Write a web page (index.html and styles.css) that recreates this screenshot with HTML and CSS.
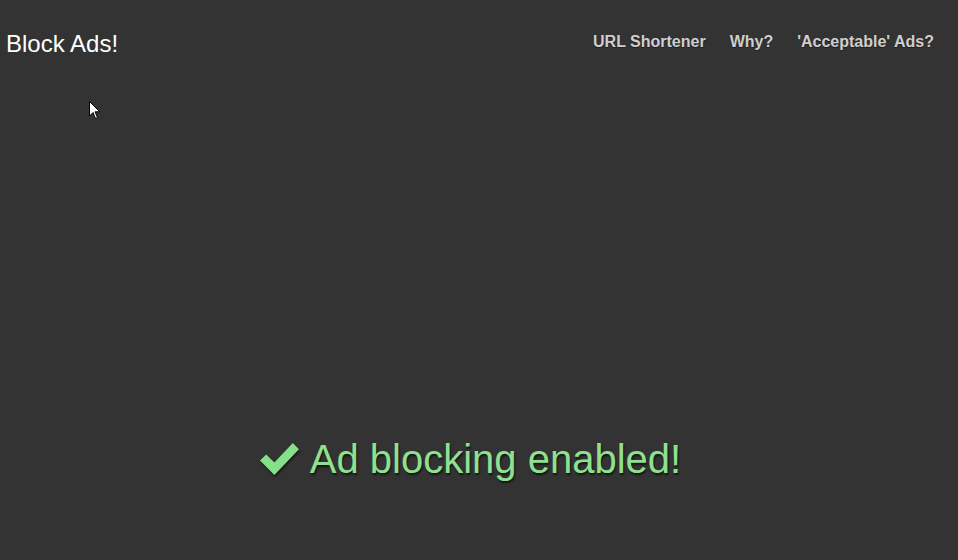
FILE: index.html
```html
<!DOCTYPE html>
<html lang="en">
<head>
    <meta charset="UTF-8">
    <meta name="viewport" content="width=device-width, initial-scale=1.0">
    <title>Block Ads!</title>
    <link rel="stylesheet" href="styles.css">
</head>
<body>
    <header class="topbar">
        <a class="brand" href="#">Block Ads!</a>
        <nav class="nav">
            <a href="#">URL Shortener</a>
            <a href="#">Why?</a>
            <a href="#">'Acceptable' Ads?</a>
        </nav>
    </header>

    <main class="status">
        <h1 class="status-msg">
            <svg class="check" viewBox="0 0 40 34" width="41" height="35" aria-hidden="true">
                <path d="M1 19 L7 13 L15 21 L33 2 L39 8 L15 33 Z" fill="#85e089"/>
            </svg>
            Ad blocking enabled!
        </h1>
    </main>

    <!-- mouse pointer seen in the screenshot -->
    <svg class="pointer" viewBox="0 0 12 19" width="12" height="19" aria-hidden="true">
        <path d="M0.5 0.5 L0.5 15 L4 11.5 L6.5 17.5 L8.5 16.5 L6 10.8 L10.8 10.8 Z" fill="#fff" stroke="#000" stroke-width="1"/>
    </svg>
</body>
</html>
```

FILE: styles.css
```css
body {
    font-family: 'Liberation Sans', Arial, sans-serif;
    background-color: #333;
    color: #fff;
    margin: 0;
    padding: 0;
    min-height: 100vh;
    display: flex;
    flex-direction: column;
}

a {
    text-decoration: none;
}

.topbar {
    display: flex;
    justify-content: space-between;
    align-items: center;
    padding: 30px 24px 0 6px;
}

.brand {
    color: #fff;
    font-size: 24px;
}

.nav {
    display: flex;
    gap: 24px;
    margin-bottom: 4px;
}

.nav a {
    color: #cfcfcf;
    font-size: 16px;
    font-weight: bold;
    text-shadow: 0 1px 1px rgba(0, 0, 0, 0.4);
}

.status {
    display: flex;
    justify-content: center;
    align-items: flex-start;
    padding-top: 379px;
    padding-right: 18px;
}

.status-msg {
    display: flex;
    align-items: center;
    gap: 10px;
    margin: 0;
    font-size: 40px;
    font-weight: normal;
    color: #8fe08f;
    text-shadow: 1px 2px 2px rgba(0, 0, 0, 0.6);
}

.check {
    margin-top: -3px;
    filter: drop-shadow(1px 2px 1px rgba(0, 0, 0, 0.5));
}

.pointer {
    position: absolute;
    left: 89px;
    top: 101px;
}
```
